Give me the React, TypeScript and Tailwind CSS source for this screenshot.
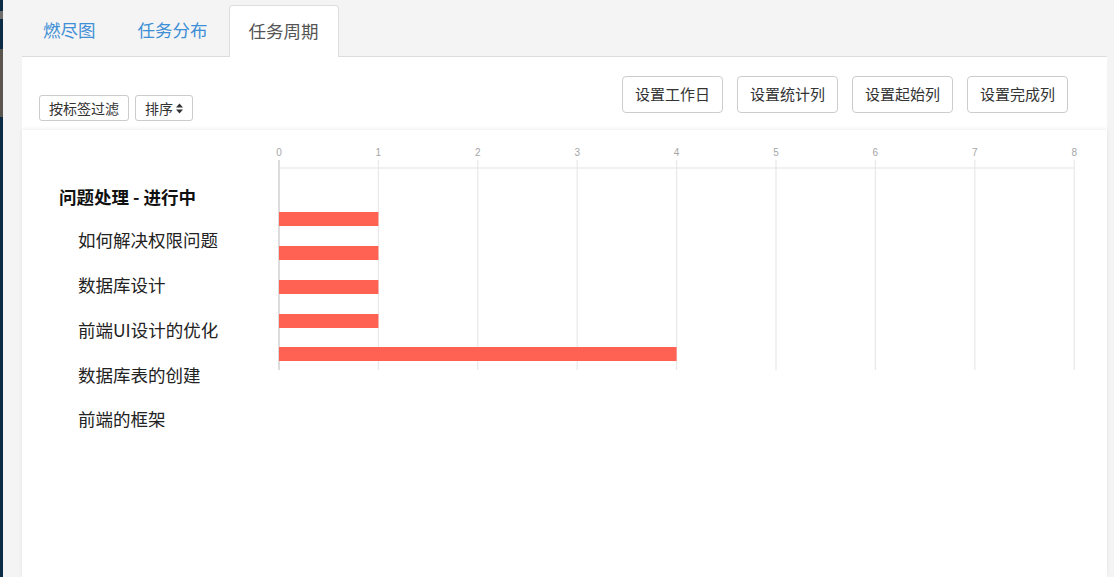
import React from "react";

const font = { fontFamily: '"Noto Sans CJK SC", "Noto Sans", sans-serif' };

const tabs = [
  { label: "燃尽图", active: false },
  { label: "任务分布", active: false },
  { label: "任务周期", active: true },
];

const actions = ["设置工作日", "设置统计列", "设置起始列", "设置完成列"];

const tasks = [
  { name: "如何解决权限问题", days: 1 },
  { name: "数据库设计", days: 1 },
  { name: "前端UI设计的优化", days: 1 },
  { name: "数据库表的创建", days: 1 },
  { name: "前端的框架", days: 4 },
];

function SortIcon() {
  return (
    <svg width="7" height="11" viewBox="0 0 7 11" className="ml-[3px]">
      <path d="M3.5 0.5 L7 4.5 L0 4.5 Z" fill="#333" />
      <path d="M3.5 10.5 L7 6.5 L0 6.5 Z" fill="#333" />
    </svg>
  );
}

function CycleChart() {
  const x0 = 9;
  const unit = 99.4;
  const ticks = [0, 1, 2, 3, 4, 5, 6, 7, 8];
  const barTops = [72, 106, 140, 174, 207];
  return (
    <svg width="815" height="240" viewBox="0 0 815 240">
      {/* grid */}
      <line x1={x0} y1="28" x2={x0 + unit * 8} y2="28" stroke="#ededed" strokeWidth="1.5" />
      {ticks.map((t) => (
        <g key={t}>
          <line
            x1={x0 + unit * t}
            y1="20"
            x2={x0 + unit * t}
            y2="230"
            stroke={t === 0 ? "#dcdcdc" : "#e8e8e8"}
            strokeWidth={t === 0 ? 2 : 1.2}
          />
          <text
            x={x0 + unit * t}
            y="16"
            textAnchor="middle"
            fontSize="10"
            fill="#a6a6a6"
            fontFamily="Liberation Sans, sans-serif"
          >
            {t}
          </text>
        </g>
      ))}
      {/* bars */}
      {tasks.map((task, i) => (
        <rect key={task.name} x={x0} y={barTops[i]} width={unit * task.days} height="14" fill="#ff6252" />
      ))}
    </svg>
  );
}

export default function App() {
  return (
    <div className="flex h-[577px] w-[1114px] overflow-hidden" style={font}>
      {/* side strip */}
      <div className="flex w-[3px] flex-col bg-[#0c2b45]">
        <div className="mt-[11px] h-[8px] bg-[#6d6d6d]" />
        <div className="mt-[30px] h-[68px] bg-[#5b5550]" />
      </div>

      <div className="flex flex-1 flex-col bg-[#f4f4f4] pl-[19px] pr-[7px]">
        {/* tabs */}
        <div className="flex h-[57px] items-end border-b border-[#dddddd]">
          {tabs.map((tab) => (
            <div
              key={tab.label}
              className={
                tab.active
                  ? "-mb-px flex h-[52px] items-center rounded-t-[4px] border border-b-0 border-[#dddddd] bg-white px-[19px] text-[17.5px] text-[#555555]"
                  : "flex h-[51px] items-center px-[21px] text-[17.5px] text-[#3f8fd6]"
              }
            >
              {tab.label}
            </div>
          ))}
        </div>

        {/* panel */}
        <div className="flex flex-1 flex-col bg-white">
          <div className="flex h-[73px] items-start justify-between pl-[17px] pr-[39px]">
            <div className="mt-[38px] flex gap-[6px]">
              <button className="h-[26px] rounded-[3px] border border-[#cccccc] bg-white px-[9px] text-[14px] text-[#333333]">
                按标签过滤
              </button>
              <button className="flex h-[26px] items-center rounded-[3px] border border-[#cccccc] bg-white px-[9px] text-[14px] text-[#333333]">
                排序
                <SortIcon />
              </button>
            </div>
            <div className="mt-[19px] flex gap-[14px]">
              {actions.map((a) => (
                <button
                  key={a}
                  className="h-[37px] w-[101px] rounded-[4px] border border-[#cccccc] bg-white text-[15px] text-[#333333]"
                >
                  {a}
                </button>
              ))}
            </div>
          </div>

          {/* chart card */}
          <div className="flex flex-1 bg-white shadow-[0_-1px_4px_rgba(0,0,0,0.07)]">
            <div className="w-[248px] pl-[37px] pt-[54px]">
              <div className="flex h-[26px] items-center whitespace-nowrap text-[17.5px] font-bold text-[#111111]">
                问题处理 - 进行中
              </div>
              <div className="mt-[8px] pl-[19px]">
                {tasks.map((t) => (
                  <div key={t.name} className="flex h-[44.8px] items-center whitespace-nowrap text-[17.5px] text-[#222222]">
                    {t.name}
                  </div>
                ))}
              </div>
            </div>
            <div className="mt-[10px]">
              <CycleChart />
            </div>
          </div>
        </div>
      </div>
    </div>
  );
}
